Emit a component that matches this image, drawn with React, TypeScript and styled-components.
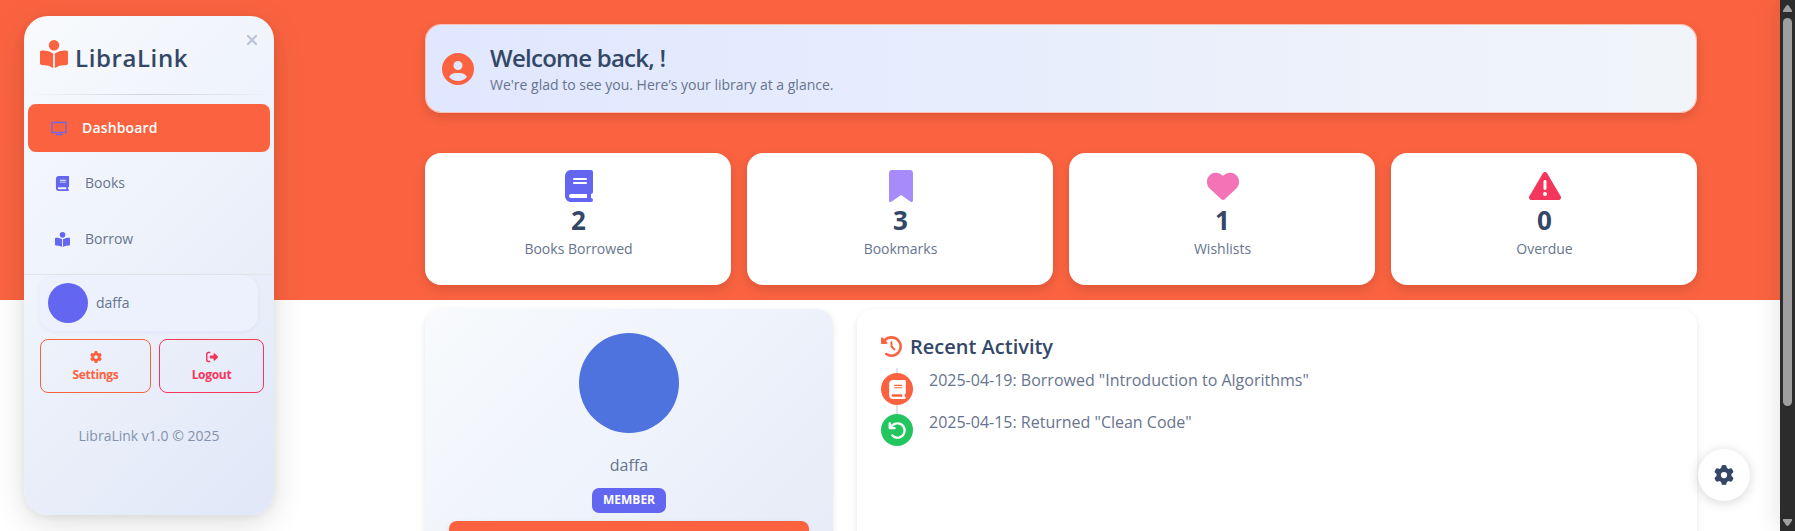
import React from "react";
import styled, { createGlobalStyle } from "styled-components";
import {
  FaArrowRotateLeft,
  FaBook,
  FaBookmark,
  FaBookOpenReader,
  FaCircleUser,
  FaClockRotateLeft,
  FaGear,
  FaHeart,
  FaRightFromBracket,
  FaTriangleExclamation,
  FaXmark,
} from "react-icons/fa6";

const GlobalStyle = createGlobalStyle`
  *, *::before, *::after { box-sizing: border-box; }
  body {
    margin: 0;
    overflow: hidden;
    background: #fff;
    color: #67748e;
    font-family: "Open Sans", "Noto Sans", sans-serif;
    font-size: 16px;
    line-height: 1.6;
  }
  svg { display: block; flex: none; }
`;

const Page = styled.div`
  display: flex;
  width: 100%;
  height: 531px;
  overflow: hidden;
  background: linear-gradient(#fb6340 300px, #fff 300px);
`;

const Sidebar = styled.aside`
  display: flex;
  flex-direction: column;
  flex: none;
  width: 250px;
  height: 499px;
  margin: 16px 0 0 24px;
  border-radius: 24px;
  background: linear-gradient(135deg, #f8fafc 0%, #eef2fb 45%, #e0e7f7 100%);
  box-shadow: 0 8px 32px rgba(0, 0, 0, 0.13), 0 2px 8px rgba(0, 0, 0, 0.06);
`;

const Brand = styled.div`
  display: flex;
  justify-content: space-between;
  height: 78px;
  padding: 0 14px 0 16px;
`;

const BrandName = styled.div`
  display: flex;
  height: 58px;
  padding-top: 24px;
  gap: 7px;
  color: #344767;
  font-size: 24px;
  font-weight: 600;
  letter-spacing: 0.6px;
  line-height: 36px;
  svg { width: 28px; height: 28px; color: #fb6340; }
`;

const CloseIcon = styled(FaXmark)`
  width: 16px;
  height: 16px;
  margin-top: 16px;
  color: #b9c2d3;
`;

const Divider = styled.div`
  height: 1px;
  background: linear-gradient(90deg, transparent, rgba(0, 0, 0, 0.14), transparent);
`;

const Nav = styled.nav`
  display: flex;
  flex-direction: column;
  gap: 8px;
  height: 179px;
  padding: 9px 4px 0;
`;

const NavItem = styled.a<{ $active?: boolean }>`
  display: flex;
  align-items: center;
  height: 48px;
  padding-left: ${(p) => (p.$active ? 23 : 26)}px;
  padding-bottom: ${(p) => (p.$active ? 0 : 2)}px;
  border-radius: 8px;
  background: ${(p) => (p.$active ? "#fb6340" : "transparent")};
  color: ${(p) => (p.$active ? "#fff" : "#67748e")};
  font-size: 14px;
  font-weight: ${(p) => (p.$active ? 600 : 400)};
  letter-spacing: ${(p) => (p.$active ? "0.15px" : "0")};
`;

const NavIcon = styled.span`
  display: flex;
  justify-content: center;
  width: 16px;
  margin-right: 15px;
  color: #6366f1;
`;

const Account = styled.section`
  display: flex;
  flex-direction: column;
  gap: 8px;
  padding: 0 10px 0 16px;
  border-top: 1px solid #e4e6ea;
`;

const UserCard = styled.div`
  display: flex;
  align-items: center;
  gap: 8px;
  width: 218px;
  height: 56px;
  padding: 0 8px;
  border-radius: 16px;
  background: #edf1fe;
  box-shadow: 0 1px 4px rgba(99, 102, 241, 0.08);
  font-size: 14px;
`;

const Avatar = styled.div<{ $size: number; $color: string }>`
  flex: none;
  width: ${(p) => p.$size}px;
  height: ${(p) => p.$size}px;
  border-radius: 50%;
  background: ${(p) => p.$color};
`;

const AccountActions = styled.div`
  display: flex;
  gap: 8px;
`;

const OutlineButton = styled.button<{ $color: string; $width: number }>`
  display: flex;
  flex-direction: column;
  align-items: center;
  gap: 3px;
  width: ${(p) => p.$width}px;
  height: 54px;
  padding: 11px 0 0;
  border: 1px solid ${(p) => p.$color};
  border-radius: 8px;
  background: transparent;
  color: ${(p) => p.$color};
  font-family: inherit;
  font-size: 12px;
  font-weight: 700;
  line-height: 18px;
  letter-spacing: -0.3px;
`;

const Version = styled.footer`
  margin-top: 32px;
  text-align: center;
  color: #8392ab;
  font-size: 14px;
`;

const Content = styled.main`
  display: flex;
  flex-direction: column;
  flex: none;
  width: 1272px;
  margin-left: 151px;
  padding-top: 24px;
`;

const Welcome = styled.header`
  display: flex;
  align-items: center;
  flex: none;
  gap: 16px;
  height: 89px;
  padding: 0 16px;
  border: 1px solid rgba(255, 255, 255, 0.6);
  border-radius: 16px;
  background: linear-gradient(90deg, #e0e7ff 0%, #f1f5f9 100%);
  background-clip: padding-box;
  box-shadow: 0 4px 12px rgba(0, 0, 0, 0.14);
`;

const WelcomeIcon = styled(FaCircleUser)`
  width: 32px;
  height: 32px;
  color: #fb6340;
`;

const WelcomeTitle = styled.h1`
  margin: 0;
  color: #344767;
  font-size: 24px;
  font-weight: 600;
  letter-spacing: -0.75px;
  line-height: 33px;
`;

const WelcomeText = styled.p`
  margin: 0;
  padding-bottom: 2px;
  font-size: 14px;
  line-height: 21px;
`;

const Stats = styled.section`
  display: grid;
  flex: none;
  grid-template-columns: repeat(4, 1fr);
  gap: 16px;
  margin-top: 40px;
`;

const StatCard = styled.article`
  display: flex;
  flex-direction: column;
  align-items: center;
  height: 132px;
  padding: 17px 0 0 1px;
  border-radius: 16px;
  background: #fff;
  box-shadow: 0 4px 12px rgba(0, 0, 0, 0.14);
`;

const StatValue = styled.div`
  margin-top: 1px;
  color: #344767;
  font-size: 26px;
  font-weight: 700;
  line-height: 35px;
`;

const StatLabel = styled.div`
  font-size: 14px;
  line-height: 22px;
`;

const Panels = styled.section`
  display: grid;
  flex: none;
  grid-template-columns: 408px 840px;
  gap: 24px;
  margin-top: 24px;
`;

const ProfileCard = styled.article`
  display: flex;
  flex-direction: column;
  align-items: center;
  height: 400px;
  padding: 24px;
  border-radius: 16px;
  background: linear-gradient(135deg, #f8fafc 0%, #eef2fb 45%, #e2e7f5 100%);
  box-shadow: 0 2px 6px rgba(0, 0, 0, 0.1);
`;

const ProfileName = styled.div`
  margin-top: 19px;
  line-height: 26px;
`;

const Badge = styled.span`
  width: 74px;
  height: 25px;
  margin: 10px 0 8px;
  border-radius: 7px;
  background: #6366f1;
  color: #fff;
  font-size: 12px;
  font-weight: 700;
  line-height: 23px;
  text-align: center;
`;

const ProfileAction = styled.button`
  width: 360px;
  height: 42px;
  border: 0;
  border-radius: 8px;
  background: #fb6340;
  box-shadow: 0 2px 5px rgba(0, 0, 0, 0.12);
`;

const ActivityCard = styled.article`
  height: 400px;
  padding: 24px;
  border-radius: 16px;
  background: #fff;
  box-shadow: 0 2px 6px rgba(0, 0, 0, 0.1);
`;

const ActivityTitle = styled.h2`
  display: flex;
  align-items: center;
  gap: 8px;
  height: 27px;
  margin: 0 0 8px;
  color: #344767;
  font-size: 20px;
  font-weight: 600;
  svg { color: #fb6340; }
`;

const Timeline = styled.ul`
  display: flex;
  flex-direction: column;
  gap: 9px;
  margin: 0;
  padding: 5px 0 0;
  list-style: none;
  background: linear-gradient(#dee2e6, #dee2e6) 15px 0 / 2px 60px no-repeat;
`;

const Event = styled.li`
  display: flex;
  gap: 16px;
  height: 32px;
`;

const EventIcon = styled.span<{ $color: string }>`
  display: flex;
  align-items: center;
  justify-content: center;
  width: 32px;
  height: 32px;
  border-radius: 50%;
  background: ${(p) => p.$color};
  color: #fff;
`;

const EventText = styled.span<{ $lift: number }>`
  margin-top: ${(p) => -p.$lift}px;
  line-height: 26px;
`;

const SettingsFab = styled.button`
  position: absolute;
  left: 1698px;
  top: 449px;
  display: flex;
  align-items: center;
  justify-content: center;
  width: 52px;
  height: 52px;
  padding: 0;
  border: 0;
  border-radius: 50%;
  background: #fff;
  color: #344767;
  box-shadow: 0 2px 12px rgba(0, 0, 0, 0.16);
`;

const Scrollbar = styled.div`
  display: flex;
  flex-direction: column;
  align-items: center;
  flex: none;
  width: 15px;
  height: 531px;
  margin-left: auto;
  padding: 5px 0;
  background: #2c2c2c;
  box-shadow: 0 0 24px rgba(0, 0, 0, 0.14);
  color: #9f9f9f;
`;

const ScrollThumb = styled.div`
  width: 9px;
  height: 388px;
  margin: 6px 0 auto;
  border-radius: 5px;
  background: #9f9f9f;
`;

const ScreenIcon = () => (
  <svg width="16" height="16" viewBox="0 0 16 16" fill="none" stroke="currentColor">
    <path d="M1 2.500h14v10H1zM4.500 14.500h7" opacity="0.9" strokeWidth="1.3" />
  </svg>
);

const ScrollArrow = ({ down }: { down?: boolean }) => (
  <svg width="9" height="7" viewBox="0 0 9 7" fill="currentColor">
    <path d={down ? "M0 0h9v1.5L6 6q-1.500 2-3 0L0 1.500z" : "M0 7h9V5.500L6 1q-1.500-2-3 0L0 5.500z"} />
  </svg>
);

const stats = [
  { icon: FaBook, color: "#6366f1", value: 2, label: "Books Borrowed" },
  { icon: FaBookmark, color: "#a78bfa", value: 3, label: "Bookmarks" },
  { icon: FaHeart, color: "#f472b6", value: 1, label: "Wishlists" },
  { icon: FaTriangleExclamation, color: "#f5365c", value: 0, label: "Overdue" },
];

export default function App() {
  return (
    <Page>
      <GlobalStyle />
      <Sidebar>
        <Brand>
          <BrandName>
            <FaBookOpenReader />
            LibraLink
          </BrandName>
          <CloseIcon />
        </Brand>
        <Divider />
        <Nav>
          <NavItem $active>
            <NavIcon><ScreenIcon /></NavIcon>
            Dashboard
          </NavItem>
          <NavItem>
            <NavIcon><FaBook size={15} /></NavIcon>
            Books
          </NavItem>
          <NavItem>
            <NavIcon><FaBookOpenReader size={15} /></NavIcon>
            Borrow
          </NavItem>
        </Nav>
        <Account>
          <UserCard>
            <Avatar $size={40} $color="#6366f1" />
            daffa
          </UserCard>
          <AccountActions>
            <OutlineButton $color="#fb6340" $width={111}>
              <FaGear size={12} />
              Settings
            </OutlineButton>
            <OutlineButton $color="#f5365c" $width={105}>
              <FaRightFromBracket size={12} />
              Logout
            </OutlineButton>
          </AccountActions>
        </Account>
        <Version>LibraLink v1.0 © 2025</Version>
      </Sidebar>

      <Content>
        <Welcome>
          <WelcomeIcon />
          <div>
            <WelcomeTitle>Welcome back, !</WelcomeTitle>
            <WelcomeText>We're glad to see you. Here’s your library at a glance.</WelcomeText>
          </div>
        </Welcome>
        <Stats>
          {stats.map(({ icon: Icon, color, value, label }) => (
            <StatCard key={label}>
              <Icon size={32} color={color} />
              <StatValue>{value}</StatValue>
              <StatLabel>{label}</StatLabel>
            </StatCard>
          ))}
        </Stats>
        <Panels>
          <ProfileCard>
            <Avatar $size={100} $color="#4e73df" />
            <ProfileName>daffa</ProfileName>
            <Badge>MEMBER</Badge>
            <ProfileAction aria-label="Profile" />
          </ProfileCard>
          <ActivityCard>
            <ActivityTitle>
              <FaClockRotateLeft size={21} />
              Recent Activity
            </ActivityTitle>
            <Timeline>
              <Event>
                <EventIcon $color="#fb6340"><FaBook size={19} /></EventIcon>
                <EventText $lift={6}>2025-04-19: Borrowed "Introduction to Algorithms"</EventText>
              </Event>
              <Event>
                <EventIcon $color="#22c55e"><FaArrowRotateLeft size={19} /></EventIcon>
                <EventText $lift={5}>2025-04-15: Returned "Clean Code"</EventText>
              </Event>
            </Timeline>
          </ActivityCard>
        </Panels>
      </Content>

      <SettingsFab aria-label="Settings">
        <FaGear size={20} />
      </SettingsFab>
      <Scrollbar>
        <ScrollArrow />
        <ScrollThumb />
        <ScrollArrow down />
      </Scrollbar>
    </Page>
  );
}
